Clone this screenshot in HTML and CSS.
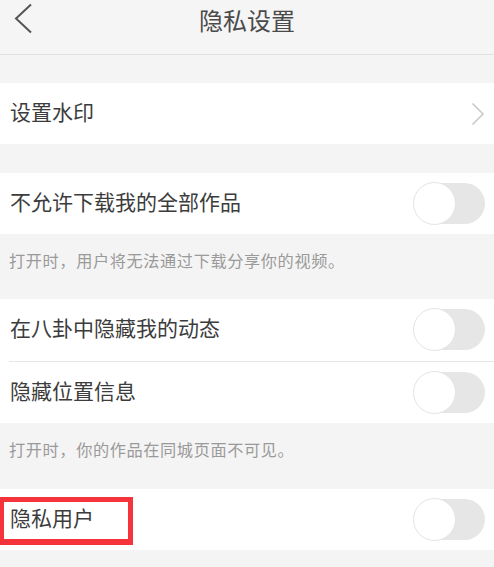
FILE: index.html
```html
<!DOCTYPE html>
<html lang="zh">
<head>
<meta charset="utf-8">
<title>隐私设置</title>
<link rel="stylesheet" href="styles.css">
</head>
<body>
<header class="topbar">
  <span class="back">
    <svg width="20" height="32" viewBox="0 0 20 32"><path d="M17 1.5 L2 15.5 L17 29.5" fill="none" stroke="#555" stroke-width="2" stroke-linejoin="miter"/></svg>
  </span>
  <h1 class="title">隐私设置</h1>
</header>

<section class="group first">
  <div class="row">
    <span class="label">设置水印</span>
    <svg class="chev" width="14" height="24" viewBox="0 0 14 24"><path d="M1.5 1.5 L12 12 L1.5 22.5" fill="none" stroke="#c8c8c8" stroke-width="1.5"/></svg>
  </div>
</section>

<section class="group gap">
  <div class="row">
    <span class="label">不允许下载我的全部作品</span>
    <span class="switch"><span class="knob"></span></span>
  </div>
</section>
<p class="note">打开时，用户将无法通过下载分享你的视频。</p>

<section class="group">
  <div class="row divided">
    <span class="label">在八卦中隐藏我的动态</span>
    <span class="switch"><span class="knob"></span></span>
  </div>
  <div class="row">
    <span class="label">隐藏位置信息</span>
    <span class="switch"><span class="knob"></span></span>
  </div>
</section>
<p class="note tall">打开时，你的作品在同城页面不可见。</p>

<section class="group">
  <div class="row marked">
    <span class="label">隐私用户</span>
    <span class="switch"><span class="knob"></span></span>
    <span class="highlight"></span>
  </div>
</section>
</body>
</html>
```

FILE: styles.css
```css
* { box-sizing: border-box; }
html, body {
  margin: 0;
  padding: 0;
  background: #f4f4f4;
  font-family: "Noto Sans CJK SC", "Noto Sans", sans-serif;
}
.topbar {
  position: relative;
  height: 55px;
  border-bottom: 1px solid #e2e2e2;
  background: #f5f5f5;
  display: flex;
  align-items: center;
  justify-content: center;
}
.back {
  position: absolute;
  left: 14px;
  top: 3px;
  display: flex;
}
.title {
  margin: 0 0 14px 0;
  font-size: 24px;
  font-weight: normal;
  color: #4a4a4a;
  line-height: 30px;
}
.group {
  background: #fff;
}
.group.first { margin-top: 28px; }
.group.gap { margin-top: 29px; }
.row {
  position: relative;
  height: 61px;
  display: flex;
  align-items: center;
  justify-content: space-between;
  padding: 0 9px 0 10px;
}
.row.divided { margin-bottom: 2px; }
.row.divided::after {
  content: "";
  position: absolute;
  left: 9px;
  right: 0;
  bottom: -2px;
  height: 1px;
  background: #e6e6e6;
}
.label {
  font-size: 21px;
  color: #3c3c3c;
  line-height: 28px;
  margin-bottom: 5px;
}
.switch {
  width: 71px;
  height: 41px;
  border-radius: 21px;
  background: #e6e6e6;
  display: flex;
  align-items: center;
  flex-shrink: 0;
}
.knob {
  width: 43px;
  height: 43px;
  border-radius: 50%;
  background: #fff;
  border: 1.5px solid #e4e4e4;
  margin-left: -1px;
}
.note {
  margin: 0;
  height: 65px;
  padding: 15px 0 0 9px;
  font-size: 16.2px;
  letter-spacing: 0.6px;
  line-height: 22px;
  color: #9a9a9a;
}
.note.tall { height: 66px; }
.highlight {
  position: absolute;
  left: 0;
  top: 8px;
  width: 133px;
  height: 48px;
  border: 5px solid #f5333a;
  border-left-width: 4px;
  border-bottom-width: 6px;
}
```
